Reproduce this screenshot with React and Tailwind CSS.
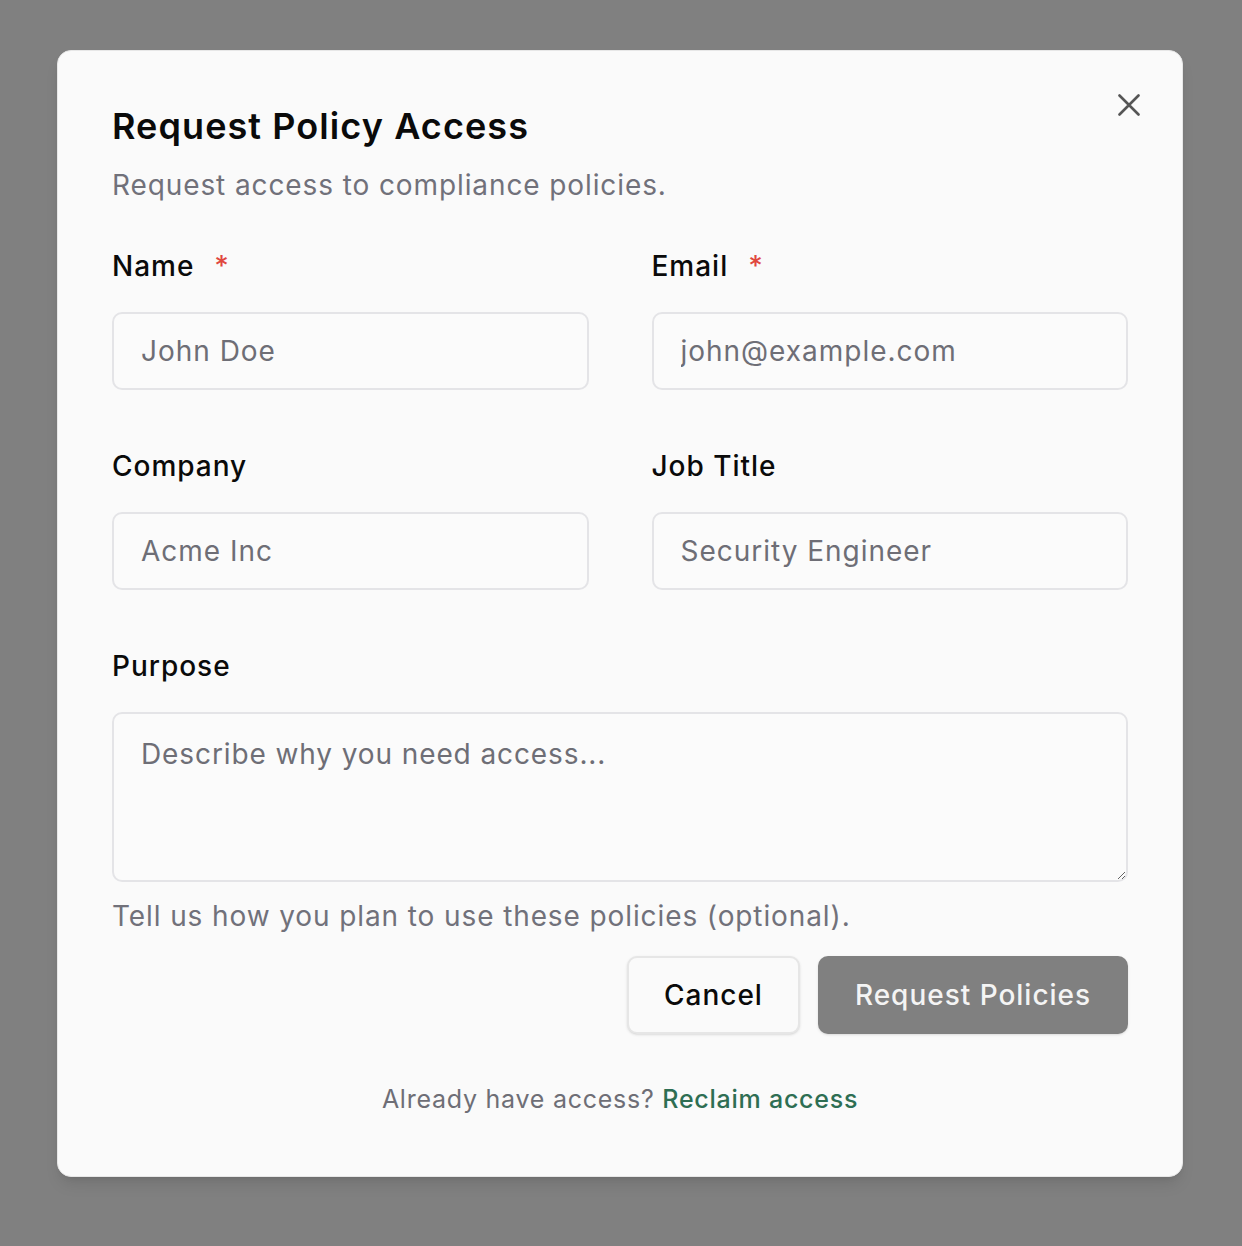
import React from "react";

function Field({ label, required, placeholder }) {
  return (
    <div className="flex flex-col">
      <label className="flex items-center h-[40px] text-[28px] font-medium tracking-[0.035em] text-[#0a0a0a]">
        {label}
        {required && <span className="ml-[20px] text-[#e0483e]">*</span>}
      </label>
      <input
        className="mt-[26px] h-[78px] w-full rounded-[10px] border-2 border-[#e4e4e7] bg-[#fbfbfb] px-[27px] text-[28px] tracking-[0.035em] text-[#0a0a0a] placeholder:text-[#6e6e76] outline-none"
        placeholder={placeholder}
      />
    </div>
  );
}

export default function App() {
  return (
    <div
      className="h-[1246px] w-full bg-[#808080] pl-[57px] pt-[50px]"
      style={{ fontFamily: "Inter, 'Noto Sans', sans-serif" }}
    >
      <div className="relative w-[1126px] h-[1127px] rounded-[14px] border border-[#e7e7e7] bg-[#fafafa] px-[54px] pt-[53px] shadow-lg">
        <button className="absolute right-[42px] top-[43px] text-[#555]" aria-label="Close">
          <svg className="block" width="22" height="22" viewBox="0 0 22 22" fill="none" stroke="currentColor" strokeWidth="2.6" strokeLinecap="round">
            <path d="M1.5 1.5 L20.5 20.5 M20.5 1.5 L1.5 20.5" />
          </svg>
        </button>

        <h2 className="h-[44px] leading-[44px] text-[36px] font-semibold tracking-[0.03em] text-[#0a0a0a]">
          Request Policy Access
        </h2>
        <p className="mt-[17px] h-[40px] leading-[40px] text-[28px] tracking-[0.032em] text-[#71717a]">
          Request access to compliance policies.
        </p>

        <div className="mt-[41px] grid grid-cols-2 gap-x-[63px] gap-y-[56px]">
          <Field label="Name" required placeholder="John Doe" />
          <Field label="Email" required placeholder="john@example.com" />
          <Field label="Company" placeholder="Acme Inc" />
          <Field label="Job Title" placeholder="Security Engineer" />
        </div>

        <div className="mt-[56px] flex flex-col">
          <label className="flex items-center h-[40px] text-[28px] font-medium tracking-[0.035em] text-[#0a0a0a]">Purpose</label>
          <textarea
            className="mt-[26px] h-[170px] w-full resize-y rounded-[10px] border-2 border-[#e4e4e7] bg-[#fbfbfb] px-[27px] py-[20px] text-[28px] leading-[40px] tracking-[0.032em] text-[#0a0a0a] placeholder:text-[#6e6e76] outline-none"
            placeholder="Describe why you need access..."
          />
          <p className="mt-[14px] h-[40px] leading-[40px] text-[28px] tracking-[0.032em] text-[#71717a]">
            Tell us how you plan to use these policies (optional).
          </p>
        </div>

        <div className="mt-[20px] flex justify-end gap-[18px]">
          <button className="h-[78px] w-[173px] rounded-[10px] border-2 border-[#e6e6e6] bg-[#fafafa] text-[28px] font-medium tracking-[0.035em] text-[#0a0a0a] shadow-sm">
            Cancel
          </button>
          <button className="h-[78px] w-[310px] rounded-[10px] bg-[#808080] text-[28px] font-medium tracking-[0.035em] text-[#f4f4f4] shadow-sm">
            Request Policies
          </button>
        </div>

        <p className="mt-[45px] h-[40px] leading-[40px] text-center text-[25px] tracking-[0.03em] text-[#6e6e76]">
          Already have access?{" "}
          <a href="#" className="font-medium text-[#2e6e53]">Reclaim access</a>
        </p>
      </div>
    </div>
  );
}
